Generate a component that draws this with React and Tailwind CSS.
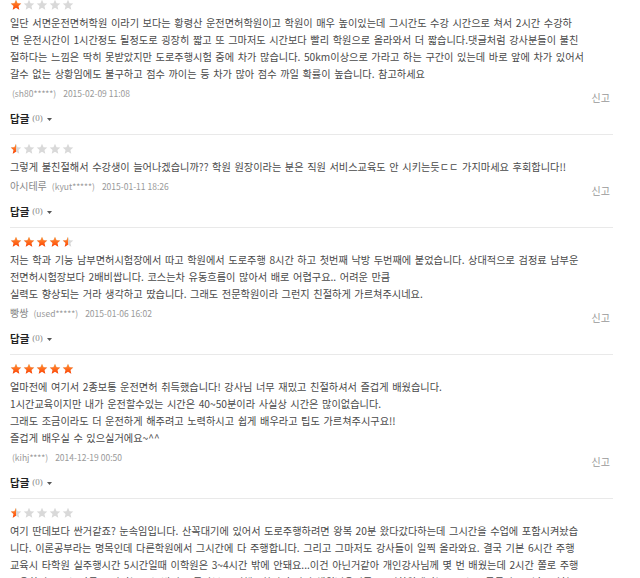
const STAR =
  "M12 1.5l3.1 6.9 7.4.7-5.6 5 1.7 7.4L12 17.6l-6.6 3.9 1.7-7.4-5.6-5 7.4-.7z";

const reviews = [
  {
    rating: 1,
    lines: [
      "일단 서면운전면허학원 이라기 보다는 황령산 운전면허학원이고 학원이 매우 높이있는데 그시간도 수강 시간으로 쳐서 2시간 수강하",
      "면 운전시간이 1시간정도 될정도로 굉장히 짧고 또 그마저도 시간보다 빨리 학원으로 올라와서 더 짧습니다.댓글처럼 강사분들이 불친",
      "절하다는 느낌은 딱히 못받았지만 도로주행시험 중에 차가 많습니다. 50km이상으로 가라고 하는 구간이 있는데 바로 앞에 차가 있어서",
      "갈수 없는 상황임에도 불구하고 점수 까이는 등 차가 많아 점수 까일 확률이 높습니다. 참고하세요",
    ],
    nick: "",
    user: "(sh80*****)",
    date: "2015-02-09 11:08",
  },
  {
    rating: 0.5,
    lines: [
      "그렇게 불친절해서 수강생이 늘어나겠습니까?? 학원 원장이라는 분은 직원 서비스교육도 안 시키는듯ㄷㄷ 가지마세요 후회합니다!!",
    ],
    nick: "아시테루",
    user: "(kyut*****)",
    date: "2015-01-11 18:26",
  },
  {
    rating: 4.5,
    lines: [
      "저는 학과 기능 남부면허시험장에서 따고 학원에서 도로주행 8시간 하고 첫번째 낙방 두번째에 붙었습니다. 상대적으로 검정료 남부운",
      "전면허시험장보다 2배비쌉니다. 코스는차 유동흐름이 많아서 배로 어렵구요.. 어려운 만큼",
      "실력도 향상되는 거라 생각하고 땄습니다. 그래도 전문학원이라 그런지 친절하게 가르쳐주시네요.",
    ],
    nick: "빵쌍",
    user: "(used*****)",
    date: "2015-01-06 16:02",
  },
  {
    rating: 5,
    lines: [
      "얼마전에 여기서 2종보통 운전면허 취득했습니다! 강사님 너무 재밌고 친절하셔서 즐겁게 배웠습니다.",
      "1시간교육이지만 내가 운전할수있는 시간은 40~50분이라 사실상 시간은 많이없습니다.",
      "그래도 조금이라도 더 운전하게 해주려고 노력하시고 쉽게 배우라고 팁도 가르쳐주시구요!!",
      "즐겁게 배우실 수 있으실거에요~^^",
    ],
    nick: "",
    user: "(kihj****)",
    date: "2014-12-19 00:50",
  },
  {
    rating: 0.5,
    lines: [
      "여기 딴데보다 싼거같죠? 눈속임입니다. 산꼭대기에 있어서 도로주행하려면 왕복 20분 왔다갔다하는데 그시간을 수업에 포함시켜놨습",
      "니다. 이론공부라는 명목인데 다른학원에서 그시간에 다 주행합니다. 그리고 그마저도 강사들이 일찍 올라와요. 결국 기본 6시간 주행",
      "교육시 타학원 실주행시간 5시간일때 이학원은 3~4시간 밖에 안돼요...이건 아닌거같아 개인강사님께 몇 번 배웠는데 2시간 쫄로 주행",
      "고용하면 4코스 다돌고 안되는코스 방점도 돌아보고 평행주차까지 꽉꽉 채워버울거든요. 이학원에서는 2코스도 못돌아요.. 남부면허",
    ],
    nick: "",
    user: "(used*****)",
    date: "2014-12-01 10:12",
  },
];

function Star({ fill, id }) {
  return (
    <svg width="12" height="12" viewBox="0 0 24 24">
      <defs>
        <linearGradient id={`sg-${id}`} x1="0" y1="0" x2="0" y2="1">
          <stop offset="0" stopColor="#ff9a3c" />
          <stop offset="1" stopColor="#ff4000" />
        </linearGradient>
        <clipPath id={`sc-${id}`}>
          <rect x="0" y="0" width="12" height="24" />
        </clipPath>
      </defs>
      <path d={STAR} fill="#d9d9d9" />
      {fill > 0 && (
        <path
          d={STAR}
          fill={`url(#sg-${id})`}
          clipPath={fill < 1 ? `url(#sc-${id})` : undefined}
        />
      )}
    </svg>
  );
}

function Stars({ rating, idx }) {
  return (
    <div className="flex h-[12px] gap-[1px]">
      {[0, 1, 2, 3, 4].map((i) => {
        const f = Math.max(0, Math.min(1, rating - i));
        return <Star key={i} fill={f} id={`${idx}-${i}`} />;
      })}
    </div>
  );
}

function Review({ r, idx }) {
  return (
    <div
      className={`border-b border-[#e9e9e9] pt-[8px] pb-[7px] ${
        idx === 0 ? "-mt-[9px]" : ""
      }`}
    >
      <Stars rating={r.rating} idx={idx} />
      <div className="mt-[3px] text-[10.2px] leading-[17px] text-[#4a4a4a] whitespace-nowrap [word-spacing:1.3px]">
        {r.lines.map((l, i) => (
          <div key={i}>{l}</div>
        ))}
      </div>
      <div className="mt-[4px] flex items-start justify-between">
        <div className="flex h-[14px] items-center leading-[14px]">
          {r.nick && (
            <span className="mr-[3px] text-[10px] text-[#888]">{r.nick}</span>
          )}
          <span className="ml-[2px] text-[8.5px] text-[#999]">{r.user}</span>
          <span className="ml-[7px] text-[8.5px] text-[#999]">{r.date}</span>
        </div>
        <span className="mt-[5px] mr-[3px] text-[10px] leading-[14px] text-[#999]">
          신고
        </span>
      </div>
      <div className="mt-[6px] flex h-[16px] items-center">
        <span className="text-[10.5px] font-bold text-[#222]">답글</span>
        <span className="ml-[3px] font-['Liberation_Serif',serif] text-[9px] text-[#888]">
          (0)
        </span>
        <svg className="ml-[4px]" width="5" height="3" viewBox="0 0 5 3">
          <path d="M0 0h5L2.5 3z" fill="#555" />
        </svg>
      </div>
    </div>
  );
}

export default function App() {
  return (
    <div className="h-[578px] overflow-hidden bg-white font-['Noto_Sans_CJK_KR',sans-serif]">
      <div className="ml-[10px] w-[603px]">
        {reviews.map((r, i) => (
          <Review key={i} r={r} idx={i} />
        ))}
      </div>
    </div>
  );
}
